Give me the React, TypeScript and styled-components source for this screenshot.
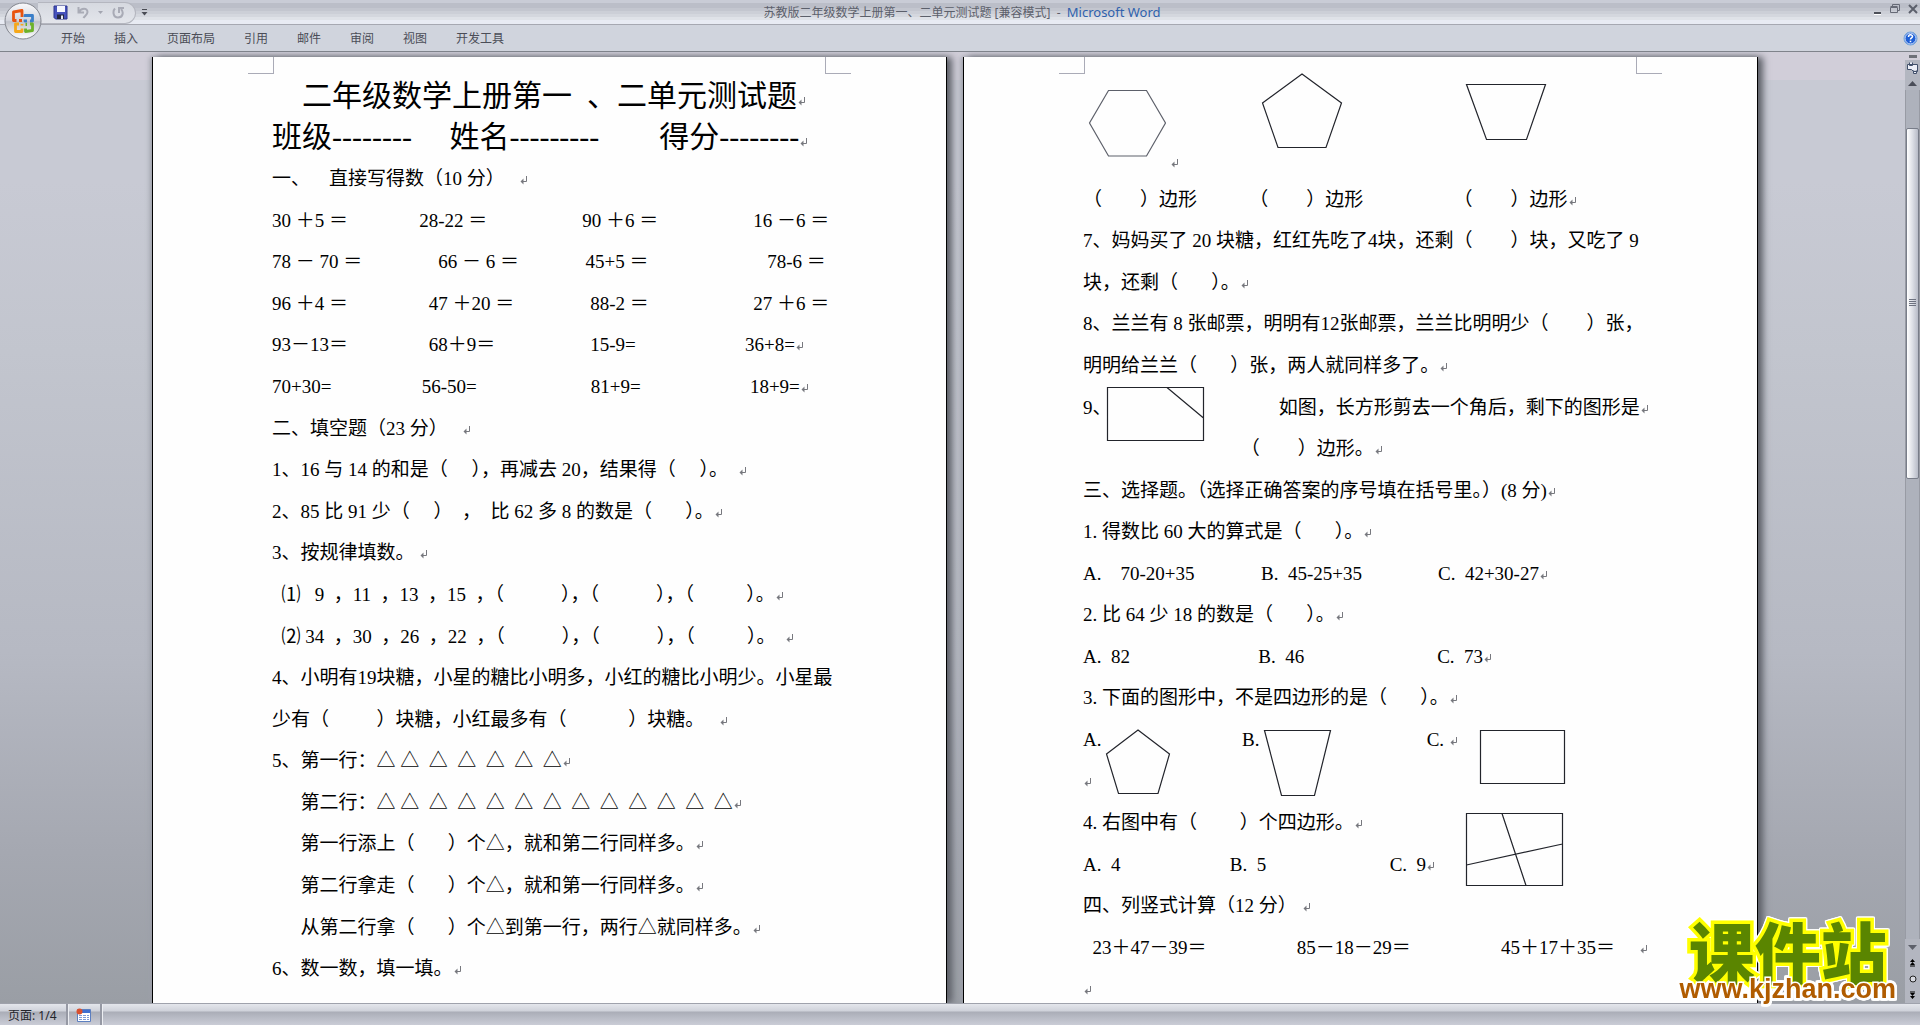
import React from 'react';
import styled, { createGlobalStyle } from 'styled-components';

const Global = createGlobalStyle`
  html, body { margin: 0; height: 100%; overflow: hidden; }
  * { box-sizing: border-box; }
  button { font: inherit; color: inherit; background: none; border: 0; padding: 0; margin: 0; display: inline-flex; align-items: center; justify-content: center; }
  svg { display: block; flex: none; }
`;

const Window = styled.div`
  display: flex;
  flex-direction: column;
  height: 100vh;
  font-family: 'Noto Sans', 'Noto Sans CJK SC', sans-serif;
  font-size: 12px;
  color: #4b4d57;
`;

const TopBar = styled.header`
  position: relative;
  flex: none;
`;

const TitleBar = styled.div`
  display: grid;
  grid-template-columns: 1fr auto 1fr;
  height: 25px;
  border-bottom: 1px solid #a6a8b1;
  background: linear-gradient(#c9ccd6 0 3px, #bbbec8 3px 8px, #c3c6cf 8px 11px, #cccfd7 11px 14px, #d4d7de 14px 17px, #dfe2e8 17px 20px, #e8ebf3 20px);
`;

const QuickAccess = styled.div`
  display: flex;
  align-items: center;
  padding-left: 38px;
`;

const QuickPill = styled.div`
  display: flex;
  align-items: center;
  gap: 9px;
  height: 22px;
  width: 98px;
  padding-left: 15px;
  border: 1px solid #b4b6bf;
  border-left: 0;
  border-radius: 0 11px 11px 0;
  background: linear-gradient(#d6d9e0, #e3e5eb);
  margin-right: 5px;
`;

const Title = styled.h1`
  margin: 0;
  padding-left: 4px;
  font-size: 12px;
  font-weight: 400;
  line-height: 24px;
  color: #5c606b;
  white-space: pre;
  em { font-style: normal; font-size: 13px; color: #2f62ad; }
`;

const WindowButtons = styled.div`
  display: flex;
  justify-content: flex-end;
  gap: 8px;
  height: 18px;
  padding-right: 2px;
`;

const TabBar = styled.nav`
  display: flex;
  align-items: center;
  gap: 29px;
  height: 27px;
  padding: 0 2px 0 61px;
  background: #d0d4dd;
  border-bottom: 1px solid #7f838b;
`;

const HelpButton = styled.button`
  margin-left: auto !important;
`;

const OfficeButton = styled.button`
  position: absolute;
  left: 4px;
  top: 2px;
`;

const Main = styled.main`
  position: relative;
  flex: 1;
  min-height: 0;
  display: flex;
  background: linear-gradient(#d1ced9 0 28px, #c8cad4 28px 130px, #c2c5ce 300px, #b6b9c3 600px, #a5a8b1 800px, #9a9ea5);
`;

const Canvas = styled.div`
  flex: 1;
  min-width: 0;
  display: flex;
  justify-content: center;
  gap: 16px;
  padding: 5px 0 0 5px;
  overflow: hidden;
`;

const Page = styled.article`
  width: 795px;
  flex: none;
  display: flex;
  flex-direction: column;
  background: #fefefe;
  border: solid #000;
  border-width: 0 1px;
  padding: 0 119px;
  box-shadow: 5px 0 7px #5b5e66, -2px 0 5px #a0a3ad;
  overflow: hidden;
  font-family: 'Liberation Serif', 'Noto Sans CJK SC', serif;
  font-size: 19px;
  line-height: 24px;
  color: #000;
`;

const CropMarks = styled.div`
  display: flex;
  justify-content: space-between;
  flex: none;
  height: 17px;
  margin: 0 -24px;
  &::before, &::after {
    content: '';
    width: 25px;
    border-bottom: 1px solid #aaabb7;
  }
  &::before { border-right: 1px solid #aaabb7; }
  &::after { border-left: 1px solid #aaabb7; }
`;

const Lines = styled.div<{ $bleed?: boolean }>`
  flex: 1;
  min-height: 0;
  display: flex;
  flex-direction: column;
  padding-top: 1px;
  margin-bottom: ${p => (p.$bleed ? '-7px' : '13px')};
`;

const Line = styled.p<{ $large?: boolean }>`
  flex: 1 1 0;
  min-height: 0;
  margin: 0;
  display: flex;
  align-items: center;
  white-space: pre;
  font-size: ${p => (p.$large ? '30px' : 'inherit')};
`;

const Block = styled.div<{ $gap: number }>`
  flex: 2 1 0;
  min-height: 0;
  display: flex;
  align-items: flex-start;
  gap: ${p => p.$gap}px;
`;

const Stack = styled.div`
  align-self: stretch;
  display: flex;
  flex-direction: column;
`;

const Figure = styled.svg<{ $drop?: number }>`
  margin-top: ${p => p.$drop || 0}px;
  overflow: visible;
  fill: none;
  stroke: #22242b;
  stroke-width: 1.2;
`;

const ShapeRow = styled.div`
  display: flex;
  align-items: flex-start;
  flex: none;
  height: 104px;
  padding-left: 6px;
  & > :nth-child(3) { margin-left: 83px; }
  & > :nth-child(4) { margin-left: 124px; }
`;

const ShapeMark = styled.span`
  align-self: flex-end;
  padding: 0 0 4px 4px;
`;

const Mark = styled.svg`
  && { display: inline-block; margin-left: 1px; }
`;

const ScrollColumn = styled.aside`
  width: 15px;
  flex: none;
  display: flex;
  flex-direction: column;
  align-items: stretch;
  background: #b3b6c0;
`;

const SplitHandle = styled.div`
  height: 8px;
  background: #d1ced9;
  padding: 3px 3px 2px 4px;
  &::before { content: ''; display: block; height: 3px; background: #6d7078; }
`;

const ScrollButton = styled.button<{ $h: number }>`
  height: ${p => p.$h}px;
`;

const Track = styled.div`
  flex: 1;
  display: flex;
  flex-direction: column;
  border: solid #989ba4;
  border-width: 0 1px;
  background: #aeb2bc;
`;

const Thumb = styled.div`
  flex: 350;
  display: flex;
  align-items: center;
  justify-content: center;
  border: 1px solid #787d89;
  border-radius: 2px;
  background: linear-gradient(90deg, #fff, #dcdfe6 50%, #b7bbc7);
`;

const TrackSpace = styled.div<{ $part: number }>`
  flex: ${p => p.$part};
`;

const StatusBar = styled.footer`
  flex: none;
  display: flex;
  height: 22px;
  border-top: 1px solid #9fa2ac;
  background: linear-gradient(#e4e6ec, #cfd2da 7px, #aaadb7 8px, #b9bcc6 14px, #caccd6);
  color: #23252b;
`;

const StatusItem = styled.button`
  && { padding: 0 9px 0 8px; border-right: 2px solid #9699a4; box-shadow: 1px 0 #eceef2; }
`;

const Watermark = styled.div`
  position: absolute;
  right: 24px;
  bottom: 0;
  display: flex;
  flex-direction: column;
  align-items: center;
  paint-order: stroke fill;
  filter: drop-shadow(1px 0 #fff) drop-shadow(-1px 0 #fff) drop-shadow(0 1px #fff) drop-shadow(0 -1px #fff);
`;

const WatermarkName = styled.strong`
  font: 900 66px/52px 'Noto Sans CJK SC', sans-serif;
  color: #5a8500;
  -webkit-text-stroke: 7px #ff0;
`;

const WatermarkUrl = styled.span`
  font: 700 27px/28px 'Liberation Sans', Arial, sans-serif;
  color: #b05c00;
  -webkit-text-stroke: 3px #fff;
`;

const Ret = () => (
  <Mark width="8" height="9" viewBox="0 0 8 9" fill="none" stroke="#77787e" aria-hidden="true">
    <path d="M6.5 0v5.5H1" />
    <path d="M.5 5.5L3.500 2.500v6z" fill="#77787e" stroke="none" />
  </Mark>
);

const L = ({ t, end = true, large }: { t: string; end?: boolean; large?: boolean }) => (
  <Line $large={large}>
    <span>{t}{end && <Ret />}</span>
  </Line>
);

const OfficeLogo = () => (
  <svg width="38" height="38" viewBox="0 0 38 38">
    <defs>
      <linearGradient id="orb" x1="0" y1="0" x2="0" y2="1">
        <stop offset="0" stopColor="#fafafc" />
        <stop offset=".48" stopColor="#d3d5dd" />
        <stop offset=".52" stopColor="#bfc2cb" />
        <stop offset="1" stopColor="#fff" />
      </linearGradient>
    </defs>
    <circle cx="19" cy="19" r="18" fill="url(#orb)" stroke="#83868f" />
    <g fill="none" strokeWidth="2.8" strokeLinejoin="round">
      <path d="M12.500 18.500H9.500V10l8.500-1.500v6.500M15 18.500h3" stroke="#e8530e" />
      <path d="M21 15v-1.500h7.500V19h-2.500M21 17.500v1.500h2" stroke="#3b7fc9" />
      <path d="M15 22h-3.500v7.500h6.500v-3M18 22v1.500" stroke="#f6a81a" />
      <path d="M21.500 26.500v3l7-1V22H26M21.500 22.500h1.500" stroke="#6db22a" />
    </g>
  </svg>
);

const SaveIcon = () => (
  <svg width="15" height="15" viewBox="0 0 15 15">
    <path d="M1 1h13v13H2.500L1 12.500z" fill="#4652bd" stroke="#2c348e" />
    <path d="M4 1h8v6H4z" fill="#f4f6ff" />
    <path d="M4 9.500h7V14H4z" fill="#23273f" />
    <path d="M8 10.500h2V14H8z" fill="#e8eaf4" />
  </svg>
);

const UndoIcon = () => (
  <svg width="12" height="13" viewBox="0 0 12 13" fill="none" stroke="#a9abb6" strokeWidth="2">
    <path d="M1.500 1v5.500H7M2 6c2-4 8.500-4.500 8.500 0 0 3-3 4-4 6" />
  </svg>
);

const RedoIcon = () => (
  <svg width="13" height="13" viewBox="0 0 13 13" fill="none" stroke="#a9abb6" strokeWidth="2">
    <path d="M3 2.500C.500 5 1 11.500 6 11.500S12 6 9 3M7 7V2h5" />
  </svg>
);

const Down = ({ c = '#4a4c55', bar = false }: { c?: string; bar?: boolean }) => (
  <svg width="7" height="7" viewBox="0 0 7 7" fill={c}>
    {bar && <path d="M1 0h5v1H1z" />}
    <path d="M.500 3h6l-3 3.500z" />
  </svg>
);

const HelpIcon = () => (
  <svg width="15" height="15" viewBox="0 0 15 15">
    <circle cx="7.500" cy="7.500" r="6.500" fill="#1f5fd6" stroke="#6fa0d8" />
    <circle cx="7.500" cy="7.500" r="5.500" fill="none" stroke="#fff" strokeWidth=".8" />
    <path d="M5.500 6c0-3 4-2.600 4-.5 0 1.500-2 1.300-2 3" fill="none" stroke="#fff" strokeWidth="1.500" />
    <path d="M6.700 9.700h1.600v1.500H6.700z" fill="#fff" />
  </svg>
);

const tabs = ['开始', '插入', '页面布局', '引用', '邮件', '审阅', '视图', '开发工具'];

export default function App() {
  return (
    <Window lang="zh-CN">
      <Global />
      <TopBar>
        <TitleBar>
          <QuickAccess>
            <QuickPill>
              <button aria-label="保存"><SaveIcon /></button>
              <button aria-label="撤消"><UndoIcon /></button>
              <button aria-label="撤消列表"><svg width="5" height="3" viewBox="0 0 5 3"><path d="M0 0h5L2.500 3z" fill="#a3a5b0" /></svg></button>
              <button aria-label="重复"><RedoIcon /></button>
            </QuickPill>
            <button aria-label="自定义快速访问工具栏"><Down bar /></button>
          </QuickAccess>
          <Title>苏教版二年级数学上册第一、二单元测试题 [兼容模式]  -  <em>Microsoft Word</em></Title>
          <WindowButtons>
            <button aria-label="最小化">
              <svg width="8" height="12" viewBox="0 0 8 12"><path d="M0 9h7v2H0z" fill="#4d5059" /><path d="M0 11h7v1H0z" fill="#fff" /></svg>
            </button>
            <button aria-label="还原">
              <svg width="10" height="12" viewBox="0 0 10 12" fill="none" stroke="#666a76">
                <path d="M2.500 3V1.500h7v6H8M.500 4.500h7v5h-7zM.500 3.500h7" />
              </svg>
            </button>
            <button aria-label="关闭">
              <svg width="10" height="12" viewBox="0 0 10 12" stroke="#5c606c" strokeWidth="2"><path d="M1 2l8 8M9 2l-8 8" /></svg>
            </button>
          </WindowButtons>
        </TitleBar>
        <TabBar>
          {tabs.map(t => <button key={t}>{t}</button>)}
          <HelpButton aria-label="帮助"><HelpIcon /></HelpButton>
        </TabBar>
        <OfficeButton aria-label="Office"><OfficeLogo /></OfficeButton>
      </TopBar>

      <Main>
        <Canvas>
          <Page>
            <CropMarks />
            <Lines>
              <L large t="    二年级数学上册第一  、二单元测试题" />
              <L large t="班级--------     姓名---------        得分--------" />
              <L t="一、    直接写得数（10 分）   " />
              <L end={false} t="30 ＋5 ＝               28-22 ＝                    90 ＋6 ＝                    16 －6 ＝" />
              <L end={false} t="78 － 70 ＝                66 － 6 ＝              45+5 ＝                         78-6 ＝" />
              <L end={false} t="96 ＋4 ＝                 47 ＋20 ＝                88-2 ＝                      27 ＋6 ＝" />
              <L t="93－13＝                 68＋9＝                    15-9=                       36+8=" />
              <L t="70+30=                   56-50=                        81+9=                       18+9=" />
              <L t="二、填空题（23 分）   " />
              <L t="1、16 与 14 的和是（     ），再减去 20，结果得（     ）。  " />
              <L t="2、85 比 91 少（     ）  ，  比 62 多 8 的数是（       ）。" />
              <L t="3、按规律填数。 " />
              <L t="  ⑴   9  ，11  ，13  ，15  ，（            ），（            ），（           ）。" />
              <L t="  ⑵ 34  ，30  ，26  ，22  ，（            ），（            ），（           ）。  " />
              <L end={false} t="4、小明有19块糖，小星的糖比小明多，小红的糖比小明少。小星最" />
              <L t="少有（          ）块糖，小红最多有（             ）块糖。   " />
              <L t="5、第一行：△ △  △  △  △  △  △" />
              <L t="      第二行：△ △  △  △  △  △  △  △  △  △  △  △  △" />
              <L t="      第一行添上（       ）个△，就和第二行同样多。" />
              <L t="      第二行拿走（       ）个△，就和第一行同样多。" />
              <L t="      从第二行拿（       ）个△到第一行，两行△就同样多。" />
              <L t="6、数一数，填一填。" />
            </Lines>
          </Page>

          <Page>
            <CropMarks />
            <ShapeRow>
              <Figure $drop={16} width="77" height="67" viewBox="0 0 77 67"><path d="M19.500 .500h38L76.500 33 57.500 66h-38L.500 33z" stroke="#5d606a" /></Figure>
              <ShapeMark><Ret /></ShapeMark>
              <Figure width="80" height="74" viewBox="0 0 80 74"><path d="M40 0l39.500 29L64 73.500H16L.500 29z" /></Figure>
              <Figure $drop={10} width="80" height="56" viewBox="0 0 80 56"><path d="M.500 .500h79l-19 55h-40z" /></Figure>
            </ShapeRow>
            <Lines $bleed>
              <L t="（        ）边形           （        ）边形                   （        ）边形" />
              <L end={false} t="7、妈妈买了 20 块糖，红红先吃了4块，还剩（        ）块，又吃了 9" />
              <L t="块，还剩（       ）。" />
              <L end={false} t="8、兰兰有 8 张邮票，明明有12张邮票，兰兰比明明少（        ）张，" />
              <L t="明明给兰兰（       ）张，两人就同样多了。" />
              <Block $gap={0}>
                <Stack>
                  <L end={false} t="9、" />
                  <L end={false} t="" />
                </Stack>
                <Figure width="96" height="54" viewBox="5 0 96 54"><path d="M.500 .500h96v53H.500zM60 .500l36.500 30.500" /></Figure>
                <Stack>
                  <L t="               如图，长方形剪去一个角后，剩下的图形是" />
                  <L t="       （        ）边形。" />
                </Stack>
              </Block>
              <L t="三、选择题。（选择正确答案的序号填在括号里。）(8 分)" />
              <L t="1. 得数比 60 大的算式是（       ）。" />
              <L t="A.    70-20+35              B.  45-25+35                C.  42+30-27" />
              <L t="2. 比 64 少 18 的数是（       ）。" />
              <L t="A.  82                           B.  46                            C.  73" />
              <L t="3. 下面的图形中，不是四边形的是（       ）。" />
              <Block $gap={5}>
                <Stack>
                  <L end={false} t="A." />
                  <L t="" />
                </Stack>
                <Figure $drop={11} width="64" height="64" viewBox="0 0 64 64"><path d="M32 0l31.500 24L52 63.500H12.500L.500 24z" /></Figure>
                <Stack>
                  <L end={false} t="              B." />
                  <L end={false} t="" />
                </Stack>
                <Figure $drop={11} width="67" height="66" viewBox="0 0 67 66"><path d="M.500 .500h66l-16 65h-33z" /></Figure>
                <Stack>
                  <L t="                   C. " />
                  <L end={false} t="" />
                </Stack>
                <Figure $drop={11} width="102" height="54" viewBox="-17 0 102 54"><path d="M.500 .500h84v53H.500z" /></Figure>
              </Block>
              <Block $gap={31}>
                <Stack>
                  <L t="4. 右图中有（         ）个四边形。" />
                  <L t="A.  4                       B.  5                          C.  9" />
                </Stack>
                <Figure $drop={11} width="97" height="73" viewBox="0 0 97 73"><path d="M.500 .500h96v72H.500zM36 .500l24 72M.500 52l96-21" /></Figure>
              </Block>
              <L t="四、列竖式计算（12 分） " />
              <L t="  23＋47－39＝                   85－18－29＝                   45＋17＋35＝     " />
              <L t="" />
            </Lines>
          </Page>
        </Canvas>

        <ScrollColumn>
          <SplitHandle />
          <ScrollButton $h={16} aria-label="标尺">
            <svg width="13" height="12" viewBox="0 0 13 12" fill="#eef0f8" stroke="#42506b">
              <path d="M1.500 2.500h10v7h-4l-2-2h-4zM3.500 .500v3h3v-3M7.500 8.500v3h3v-3" />
            </svg>
          </ScrollButton>
          <ScrollButton $h={14} aria-label="向上滚动">
            <svg width="9" height="5" viewBox="0 0 9 5"><path d="M4.500 0L9 5H0z" fill="#4b4e59" /></svg>
          </ScrollButton>
          <Track>
            <TrackSpace $part={38} />
            <Thumb>
              <svg width="7" height="8" viewBox="0 0 7 8" stroke="#6d7280"><path d="M0 .500h7M0 2.500h7M0 4.500h7M0 6.500h7" /></svg>
            </Thumb>
            <TrackSpace $part={462} />
          </Track>
          <ScrollButton $h={16} aria-label="向下滚动">
            <svg width="9" height="5" viewBox="0 0 9 5"><path d="M0 0h9L4.500 5z" fill="#5d606a" /></svg>
          </ScrollButton>
          <ScrollButton $h={16} aria-label="前一页">
            <svg width="7" height="8" viewBox="0 0 7 8"><path d="M3.500 0L6 3H1zM3.500 3L6 6H1zM1 6.500h5v1H1z" /></svg>
          </ScrollButton>
          <ScrollButton $h={16} aria-label="选择浏览对象">
            <svg width="8" height="8" viewBox="0 0 8 8"><circle cx="4" cy="4" r="3" fill="#d8dae2" stroke="#222" /></svg>
          </ScrollButton>
          <ScrollButton $h={16} aria-label="下一页">
            <svg width="7" height="8" viewBox="0 0 7 8"><path d="M1 .500h5v1H1zM1 2h5L3.500 5zM1 5h5L3.500 8z" /></svg>
          </ScrollButton>
        </ScrollColumn>

        <Watermark>
          <WatermarkName>课件站</WatermarkName>
          <WatermarkUrl>www.kjzhan.com</WatermarkUrl>
        </Watermark>
      </Main>

      <StatusBar>
        <StatusItem>页面: 1/4</StatusItem>
        <StatusItem aria-label="宏录制">
          <svg width="15" height="14" viewBox="0 0 15 14">
            <path d="M1.500 1.500h13v12h-13z" fill="#fff" stroke="#5c7fc0" />
            <path d="M2 2h12v3H2z" fill="#3f6fd0" />
            <path d="M3 7.500h10M3 9.500h10M3 11.500h10" stroke="#7d9bd6" strokeDasharray="3 1" />
            <circle cx="3.500" cy="3.500" r="3" fill="#d9502f" />
          </svg>
        </StatusItem>
      </StatusBar>
    </Window>
  );
}
